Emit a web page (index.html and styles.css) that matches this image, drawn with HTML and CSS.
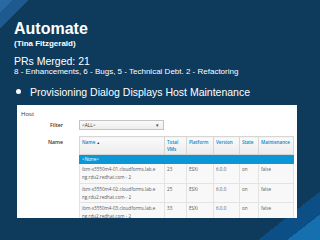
FILE: index.html
```html
<!DOCTYPE html>
<html>
<head>
<meta charset="utf-8">
<link rel="stylesheet" href="styles.css">
</head>
<body>
<div class="slide">
  <header class="intro">
    <h1 class="title">Automate</h1>
    <p class="author">(Tina Fitzgerald)</p>
    <p class="prs">PRs Merged: 21</p>
    <p class="breakdown">8 - Enhancements, 6 - Bugs, 5 - Technical Debt. 2 - Refactoring</p>
    <ul class="items">
      <li class="item"><span class="dot"></span>Provisioning Dialog Displays Host Maintenance</li>
    </ul>
  </header>
  <section class="shot">
    <div class="shot-title">Host</div>
    <div class="form">
      <div class="label">Filter</div>
      <div class="select"><span>&lt;ALL&gt;</span><span class="caret">&#9662;</span></div>
      <div class="label label-top">Name</div>
      <table class="grid">
        <colgroup>
          <col class="c-name"><col class="c-vms"><col class="c-plat"><col class="c-ver"><col class="c-state"><col class="c-maint">
        </colgroup>
        <thead>
          <tr>
            <th>Name <span class="sort">&#9650;</span></th>
            <th>Total<br>VMs</th>
            <th>Platform</th>
            <th>Version</th>
            <th>State</th>
            <th>Maintenance</th>
          </tr>
        </thead>
        <tbody>
          <tr class="selected"><td>&lt;None&gt;</td><td></td><td></td><td></td><td></td><td></td></tr>
          <tr><td>ibm-x3550m4-01.cloudforms.lab.e<br>ng.rdu2.redhat.com - 2</td><td>23</td><td>ESXi</td><td>6.0.0</td><td>on</td><td>false</td></tr>
          <tr><td>ibm-x3550m4-02.cloudforms.lab.e<br>ng.rdu2.redhat.com - 2</td><td>25</td><td>ESXi</td><td>6.0.0</td><td>on</td><td>false</td></tr>
          <tr><td>ibm-x3550m4-03.cloudforms.lab.e<br>ng.rdu2.redhat.com - 2</td><td>33</td><td>ESXi</td><td>6.0.0</td><td>on</td><td>false</td></tr>
        </tbody>
      </table>
    </div>
  </section>
</div>
</body>
</html>
```
FILE: styles.css
```css
html, body {
  margin: 0;
  padding: 0;
}
body {
  width: 320px;
  height: 240px;
  overflow: hidden;
  font-family: "Liberation Sans", Arial, sans-serif;
  color: #fff;
  background-color: #0e3a5c;
  background-image:
    linear-gradient(135deg, #2a69a3 0, #2a69a3 9px, #1d5a90 9px, #1d5a90 20px, transparent 20px),
    linear-gradient(142deg, transparent 348px, #0c4f86 348px, #0c4f86 366px, #1670b0 366px);
}
.slide {
  width: 320px;
  height: 240px;
}
.intro {
  padding: 21px 0 0 14px;
}
.title {
  margin: 0;
  font-size: 16px;
  line-height: 16px;
  font-weight: bold;
}
.author {
  margin: 2px 0 0;
  font-size: 8px;
  line-height: 10px;
  font-weight: bold;
}
.prs {
  margin: 6px 0 0;
  font-size: 10.5px;
  line-height: 12px;
}
.breakdown {
  margin: 0;
  font-size: 8px;
  line-height: 10px;
}
.items {
  list-style: none;
  margin: 8.5px 0 0;
  padding: 0;
}
.item {
  display: flex;
  align-items: center;
  font-size: 10.5px;
  line-height: 12px;
}
.dot {
  width: 5px;
  height: 5px;
  border-radius: 50%;
  background: #fff;
  margin: 0 9px 0 2px;
}
.shot {
  margin: 7.5px 0 0 17px;
  width: 280px;
  height: 113px;
  background: #fff;
  overflow: hidden;
  font-family: "Open Sans", "Liberation Sans", sans-serif;
  color: #363636;
}
.shot-title {
  padding: 5px 4px 0;
  font-size: 6px;
  line-height: 8px;
}
.form {
  margin-top: 2px;
  padding-left: 4px;
  display: grid;
  grid-template-columns: 42px 214px;
  column-gap: 16px;
  row-gap: 6px;
  align-items: center;
}
.label {
  text-align: right;
  font-size: 5.2px;
  font-weight: 600;
  line-height: 7px;
  color: #333;
}
.label-top {
  align-self: start;
  padding-top: 2.5px;
}
.select {
  width: 85px;
  height: 10px;
  box-sizing: border-box;
  border: 1px solid #c4c4c4;
  background: linear-gradient(#fafafa, #ededed);
  display: flex;
  justify-content: space-between;
  align-items: center;
  padding: 0 4px 0 2px;
  font-size: 4.8px;
  color: #333;
}
.caret {
  font-size: 5px;
  color: #444;
}
.grid {
  width: 214px;
  table-layout: fixed;
  border-collapse: collapse;
  font-size: 4.6px;
}
.c-name { width: 85px; }
.c-vms { width: 22px; }
.c-plat { width: 27px; }
.c-ver { width: 26px; }
.c-state { width: 19px; }
.c-maint { width: 35px; }
.grid th {
  text-align: left;
  vertical-align: top;
  font-weight: 600;
  color: #0088ce;
  line-height: 7px;
  height: 14px;
  padding: 2px 2px 1px;
  background: linear-gradient(#fafafa, #ececec);
  border: 1px solid #d6d6d6;
}
.sort {
  color: #333;
  font-size: 3.5px;
}
.grid td {
  vertical-align: top;
  color: #5a5a5a;
  line-height: 8px;
  padding: 1px 2px 1.5px;
  border: 1px solid #e3e3e3;
  background: #f8f8f8;
  white-space: nowrap;
  overflow: hidden;
}
.grid .selected td {
  background: #0b97d5;
  color: #fff;
  border-color: #0b97d5;
  padding: 0 2px;
  height: 8px;
}
```
